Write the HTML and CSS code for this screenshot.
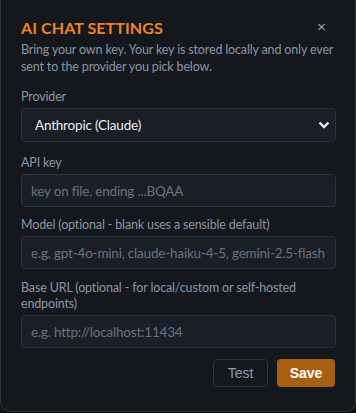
FILE: index.html
```html
<!DOCTYPE html>
<html>
<head>
<meta charset="utf-8">
<link rel="stylesheet" href="styles.css">
</head>
<body>
<div class="dialog">
  <div class="head">
    <h2 class="title">AI CHAT SETTINGS</h2>
    <button class="close" aria-label="Close">×</button>
  </div>
  <p class="desc">Bring your own key. Your key is stored locally and only ever sent to the provider you pick below.</p>
  <label class="field field-select">
    <span class="label">Provider</span>
    <span class="select">
      <span class="select-text">Anthropic (Claude)</span>
      <svg class="chev" width="12" height="8" viewBox="0 0 12 8"><path d="M1.5 1.5 L6 6 L10.5 1.5" fill="none" stroke="#e6edf3" stroke-width="2.4"/></svg>
    </span>
  </label>
  <label class="field field-key">
    <span class="label">API key</span>
    <input class="input" placeholder="key on file, ending ...BQAA">
  </label>
  <label class="field">
    <span class="label">Model (optional - blank uses a sensible default)</span>
    <input class="input" placeholder="e.g. gpt-4o-mini, claude-haiku-4-5, gemini-2.5-flash">
  </label>
  <label class="field">
    <span class="label">Base URL (optional - for local/custom or self-hosted endpoints)</span>
    <input class="input" placeholder="e.g. http://localhost:11434">
  </label>
  <div class="actions">
    <button class="btn btn-test">Test</button>
    <button class="btn btn-save">Save</button>
  </div>
</div>
</body>
</html>
```
FILE: styles.css
```css
html, body {
  margin: 0;
  padding: 0;
  background: #0d1014;
  width: 356px;
  height: 413px;
  overflow: hidden;
}
.dialog {
  box-sizing: border-box;
  width: 356px;
  height: 412px;
  background: #14171c;
  border: 1px solid #30363d;
  border-top: none;
  border-radius: 0 0 10px 10px;
  padding: 17px 20px 0 20px;
  font-family: Lato, sans-serif;
}
.head {
  display: flex;
  justify-content: space-between;
  align-items: flex-start;
}
.title {
  margin: 0;
  font-size: 16px;
  line-height: 22px;
  font-weight: 700;
  color: #f0841c;
  letter-spacing: 0.1px;
}
.close {
  background: none;
  border: none;
  color: #9aa4b0;
  font-size: 13px;
  line-height: 13px;
  padding: 0;
  margin: 3px 8px 0 0;
  font-family: "DejaVu Sans", sans-serif;
}
.desc {
  margin: 2px 0 14px 0;
  font-size: 12.5px;
  letter-spacing: -0.15px;
  line-height: 17px;
  color: #8b96a3;
}
.field {
  display: flex;
  flex-direction: column;
  margin-bottom: 11px;
}
.field-select {
  margin-bottom: 13px;
}
.field-key {
  margin-bottom: 10px;
}
.label {
  font-size: 12.5px;
  letter-spacing: -0.15px;
  line-height: 16px;
  color: #8b96a3;
  margin-bottom: 3px;
}
.select, .input {
  box-sizing: border-box;
  width: 315px;
  background: #1a1e25;
  border: 1px solid #2d333b;
  border-radius: 4px;
  font-family: Lato, sans-serif;
}
.select {
  height: 34px;
  display: flex;
  align-items: center;
  justify-content: space-between;
  padding: 0 4px 0 13px;
  color: #e6edf3;
  font-size: 13.5px;
  letter-spacing: -0.2px;
}
.chev {
  margin-right: 1px;
}
.input {
  height: 33px;
  padding: 0 9px;
  color: #e6edf3;
  outline: none;
  font-size: 13.5px;
  letter-spacing: -0.2px;
}
.input::placeholder {
  color: #6b7380;
}
.actions {
  display: flex;
  justify-content: flex-end;
  gap: 9px;
  margin-top: 5px;
}
.btn {
  height: 28px;
  border-radius: 4px;
  font-family: "Liberation Sans", Arial, sans-serif;
  font-size: 14px;
  padding: 0;
}
.btn-test {
  background: #14171c;
  border: 1px solid #30363d;
  color: #8a9bb0;
  width: 55px;
}
.btn-save {
  background: #a85f12;
  border: none;
  color: #ffffff;
  font-weight: 700;
  width: 58px;
}
```
